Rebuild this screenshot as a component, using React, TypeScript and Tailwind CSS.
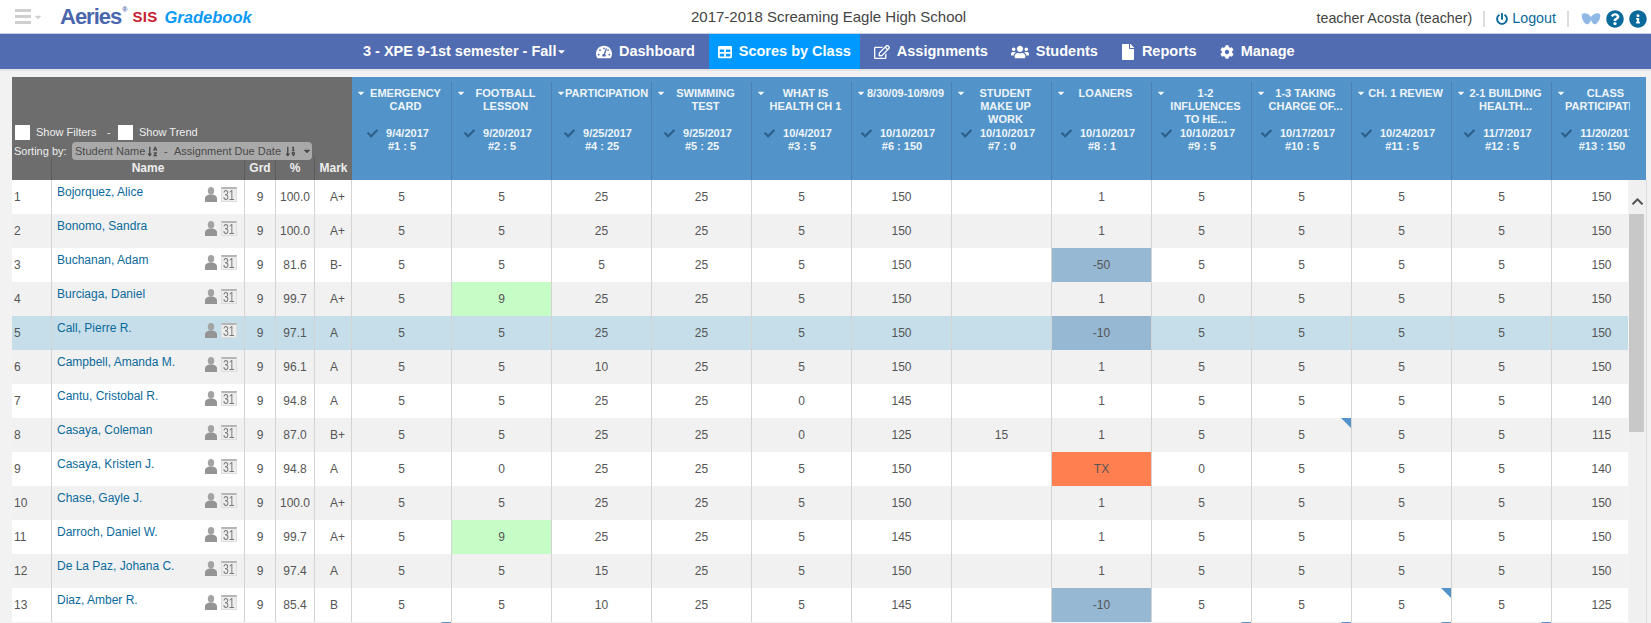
import { Fragment } from "react";
import {
  FaCaretDown,
  FaCheck,
  FaChevronUp,
  FaCog,
  FaFile,
  FaInfoCircle,
  FaPowerOff,
  FaQuestionCircle,
  FaRegEdit,
  FaSortAlphaDown,
  FaSortNumericDown,
  FaTable,
  FaTachometerAlt,
  FaUsers,
} from "react-icons/fa";

const assignments = [
  { title: "EMERGENCY CARD", date: "9/4/2017", info: "#1 : 5" },
  { title: "FOOTBALL LESSON", date: "9/20/2017", info: "#2 : 5" },
  { title: "PARTICIPATION", date: "9/25/2017", info: "#4 : 25" },
  { title: "SWIMMING TEST", date: "9/25/2017", info: "#5 : 25" },
  { title: "WHAT IS HEALTH CH 1", date: "10/4/2017", info: "#3 : 5" },
  { title: "8/30/09-10/9/09", date: "10/10/2017", info: "#6 : 150" },
  { title: "STUDENT MAKE UP WORK", date: "10/10/2017", info: "#7 : 0" },
  { title: "LOANERS", date: "10/10/2017", info: "#8 : 1" },
  { title: "1-2 INFLUENCES TO HE...", date: "10/10/2017", info: "#9 : 5" },
  { title: "1-3 TAKING CHARGE OF...", date: "10/17/2017", info: "#10 : 5" },
  { title: "CH. 1 REVIEW", date: "10/24/2017", info: "#11 : 5" },
  { title: "2-1 BUILDING HEALTH...", date: "11/7/2017", info: "#12 : 5" },
  { title: "CLASS PARTICIPATION", date: "11/20/2017", info: "#13 : 150" },
];

const students = [
  { name: "Bojorquez, Alice", pct: "100.0", mark: "A+", scores: ["5", "5", "25", "25", "5", "150", "", "1", "5", "5", "5", "5", "150"] },
  { name: "Bonomo, Sandra", pct: "100.0", mark: "A+", scores: ["5", "5", "25", "25", "5", "150", "", "1", "5", "5", "5", "5", "150"] },
  { name: "Buchanan, Adam", pct: "81.6", mark: "B-", scores: ["5", "5", "5", "25", "5", "150", "", "-50", "5", "5", "5", "5", "150"] },
  { name: "Burciaga, Daniel", pct: "99.7", mark: "A+", scores: ["5", "9", "25", "25", "5", "150", "", "1", "0", "5", "5", "5", "150"] },
  { name: "Call, Pierre R.", pct: "97.1", mark: "A", scores: ["5", "5", "25", "25", "5", "150", "", "-10", "5", "5", "5", "5", "150"] },
  { name: "Campbell, Amanda M.", pct: "96.1", mark: "A", scores: ["5", "5", "10", "25", "5", "150", "", "1", "5", "5", "5", "5", "150"] },
  { name: "Cantu, Cristobal R.", pct: "94.8", mark: "A", scores: ["5", "5", "25", "25", "0", "145", "", "1", "5", "5", "5", "5", "140"] },
  { name: "Casaya, Coleman", pct: "87.0", mark: "B+", scores: ["5", "5", "25", "25", "0", "125", "15", "1", "5", "5", "5", "5", "115"], notes: [9] },
  { name: "Casaya, Kristen J.", pct: "94.8", mark: "A", scores: ["5", "0", "25", "25", "5", "150", "", "TX", "0", "5", "5", "5", "140"] },
  { name: "Chase, Gayle J.", pct: "100.0", mark: "A+", scores: ["5", "5", "25", "25", "5", "150", "", "1", "5", "5", "5", "5", "150"] },
  { name: "Darroch, Daniel W.", pct: "99.7", mark: "A+", scores: ["5", "9", "25", "25", "5", "145", "", "1", "5", "5", "5", "5", "150"] },
  { name: "De La Paz, Johana C.", pct: "97.4", mark: "A", scores: ["5", "5", "15", "25", "5", "150", "", "1", "5", "5", "5", "5", "150"] },
  { name: "Diaz, Amber R.", pct: "85.4", mark: "B", scores: ["5", "5", "10", "25", "5", "145", "", "-10", "5", "5", "5", "5", "125"], notes: [10] },
];

const navItems = [
  { name: "Dashboard", icon: <FaTachometerAlt className="w-4 h-4" /> },
  { name: "Scores by Class", icon: <FaTable className="w-[14px] h-[14px]" />, active: true },
  { name: "Assignments", icon: <FaRegEdit className="w-4 h-4" /> },
  { name: "Students", icon: <FaUsers className="w-[18px] h-[18px]" /> },
  { name: "Reports", icon: <FaFile className="w-[14px] h-4" /> },
  { name: "Manage", icon: <FaCog className="w-[14px] h-[14px]" /> },
];

function Butterfly() {
  return (
    <svg viewBox="0 0 20 14" className="w-5 h-[14px] blur-[0.7px]">
      <path d="M1 2 C4 0 8 2 10 5 C12 2 16 0 19 2 C20 6 18 10 15 12 C13 13 11 11 10 8 C9 11 7 13 5 12 C2 10 0 6 1 2Z" fill="#8fb9e4" />
    </svg>
  );
}

function UserIcon() {
  return (
    <svg viewBox="0 0 12 15" className="w-3 h-[15px]">
      <ellipse cx="6" cy="3.8" rx="3.2" ry="3.8" fill="#a3a3a3" />
      <path d="M0 15 V11 C0 9.2 2.5 8.4 4.2 7.6 H7.8 C9.5 8.4 12 9.2 12 11 V15Z" fill="#949494" />
    </svg>
  );
}

function CalendarIcon() {
  return (
    <div className="w-4 h-[15px] bg-[#eeeeee] border border-[#dddddd] border-t-[2px] border-t-[#b5b5b5] flex justify-center overflow-hidden">
      <span className="text-[14px] leading-[12px] text-[#777777] scale-x-75">31</span>
    </div>
  );
}

function cellColor(value: string, column: number) {
  if (value === "TX") return "bg-[#ff7f50]";
  if (value === "-50" || value === "-10") return "bg-[#96b8d3] border-r-[#7ea5c4]";
  if (value === "9" && column === 1) return "bg-[#c6fcc6]";
  return "";
}

export default function App() {
  return (
    <div className="h-[623px] overflow-hidden bg-[#f2f2f2] [font-family:'Liberation_Sans',Arial,sans-serif]">
      {/* top bar */}
      <div className="h-[33px] bg-white flex items-start">
        <div className="w-[691px] flex items-center h-[33px] pl-[15px]">
          <div className="flex flex-col gap-[3.5px] w-4">
            <div className="h-[2.5px] bg-[#cfcfcf]"></div>
            <div className="h-[2.5px] bg-[#cfcfcf]"></div>
            <div className="h-[2.5px] bg-[#cfcfcf]"></div>
          </div>
          <FaCaretDown className="w-[10px] h-[10px] ml-[2px] text-[#cfcfcf]" />
          <span className="ml-[17px] text-[22px] font-bold tracking-[-1px] text-[#4a66ae]">Aeries</span>
          <span className="text-[7px] font-bold text-[#4a66ae] mb-[12px] ml-[1px]">®</span>
          <span className="ml-[5px] mt-[2px] text-[15px] font-bold tracking-[0.3px] text-[#c8202f]">SIS</span>
          <span className="ml-[7px] mt-[2px] text-[16.5px] font-bold italic text-[#0a9af5]">Gradebook</span>
        </div>
        <div className="pt-[8px] text-[15px] leading-[18px] text-[#444]">2017-2018 Screaming Eagle High School</div>
        <div className="ml-auto flex items-center h-[38px] pr-[4px] text-[14.3px]">
          <span className="text-[#444]">teacher Acosta (teacher)</span>
          <div className="ml-[11px] w-[2px] h-[16px] bg-[#ddd]"></div>
          <FaPowerOff className="ml-[11px] w-[12px] h-[12px] text-[#0a6a9c]" />
          <span className="ml-[4px] text-[#0a6a9c]">Logout</span>
          <div className="ml-[11px] w-[2px] h-[16px] bg-[#ddd]"></div>
          <div className="ml-[12px]"><Butterfly /></div>
          <FaQuestionCircle className="ml-[5px] w-[18px] h-[18px] text-[#0a6a9c]" />
          <FaInfoCircle className="ml-[5px] w-[18px] h-[18px] text-[#0a6a9c]" />
        </div>
      </div>

      {/* nav */}
      <div className="h-[36px] bg-[#516cb0] border-t border-t-[#c4cfe6] flex items-stretch text-white text-[14.5px] font-bold">
        <div className="ml-[363px] w-[224px] flex items-center">
          <span>3 - XPE 9-1st semester - Fall</span>
          <FaCaretDown className="w-[11px] h-[11px]" />
        </div>
        <div className="flex items-stretch gap-[5px]">
          {navItems.map((item) => (
            <div
              key={item.name}
              className={`flex items-center gap-[7px] px-[9px] ${item.active ? "bg-[#0099ff]" : ""}`}
            >
              {item.icon}
              <span>{item.name}</span>
            </div>
          ))}
        </div>
      </div>
      <div className="h-[2px] bg-[#e3e3e3]"></div>

      {/* gradebook */}
      <div className="ml-[12px] mt-[6px]">
        <div className="flex h-[103px] w-[1634px]">
          <div className="w-[340px] bg-[#6d6d6d] flex flex-col justify-end text-[11px] text-[#eee] whitespace-nowrap">
            <div className="flex items-center pl-[3px] h-[15px] mb-[2px]">
              <div className="w-[15px] h-[15px] bg-white"></div>
              <span className="ml-[6px] w-[60px]">Show Filters</span>
              <span className="ml-[11px] w-[4px]">-</span>
              <div className="ml-[7px] w-[15px] h-[15px] bg-white"></div>
              <span className="ml-[6px]">Show Trend</span>
            </div>
            <div className="flex items-center pl-[2px] h-[18px] relative z-10">
              <span className="w-[58px]">Sorting by:</span>
              <div className="w-[240px] h-[18px] rounded-[4px] bg-[#a9a9a9] flex items-center pl-[3px] text-[#4a4a4a]">
                <span className="w-[72px]">Student Name</span>
                <FaSortAlphaDown className="w-[11px] h-[11px] shrink-0" />
                <span className="ml-[6px] w-[4px]">-</span>
                <span className="ml-[6px] w-[108px]">Assignment Due Date</span>
                <FaSortNumericDown className="ml-[3px] w-[11px] h-[11px] shrink-0" />
                <FaCaretDown className="ml-[6px] w-[10px] h-[10px] shrink-0" />
              </div>
            </div>
            <div className="flex h-[23px] -mt-[3px] font-bold text-[12px] text-center leading-[23px]">
              <div className="w-[40px] border-r border-r-[#5c5c5c]"></div>
              <div className="w-[193px] border-r border-r-[#5c5c5c]">Name</div>
              <div className="w-[31px] border-r border-r-[#5c5c5c]">Grd</div>
              <div className="w-[39px] border-r border-r-[#5c5c5c]">%</div>
              <div className="w-[37px]">Mark</div>
            </div>
          </div>
          <div className="flex-1 flex bg-[#5294c9] overflow-hidden pt-[5px]">
            {assignments.map((a, i) => (
              <div
                key={a.info}
                className={`shrink-0 overflow-hidden text-[11px] leading-[13px] font-bold text-[#eef4f9] ${
                  i === 12 ? "w-[78px]" : "w-[100px] border-r border-r-[#4a83b3]"
                }`}
              >
                <div className="w-[100px] pt-[5px]">
                  <div className="flex items-start h-[40px]">
                    <FaCaretDown className="w-[8px] h-[10px] ml-[5px] mt-[1px] shrink-0" />
                    <div className="w-[81px] shrink-0 text-center">{a.title}</div>
                  </div>
                  <div className="flex items-center justify-center gap-[8px] pr-[8px] whitespace-nowrap">
                    <FaCheck className="w-[11px] h-[11px] text-[#2d5f8a]" />
                    <span>{a.date}</span>
                  </div>
                  <div className="text-center whitespace-nowrap">{a.info}</div>
                </div>
              </div>
            ))}
          </div>
        </div>

        <div className="flex w-[1635px]">
          <div className="w-[1617px] overflow-hidden text-[12px] text-[#555]">
            {students.map((s, r) => (
              <div
                key={s.name}
                className={`flex h-[34px] w-[1640px] ${
                  r === 4 ? "bg-[#c6deea]" : r % 2 === 0 ? "bg-white" : "bg-[#f1f1f1]"
                }`}
              >
                <div className="w-[40px] shrink-0 border-r border-r-[#d4d4d4] pl-[2px] leading-[35px]">{r + 1}</div>
                <div className="w-[193px] shrink-0 border-r border-r-[#d4d4d4] flex justify-between pl-[5px] pr-[7px] pt-[5px]">
                  <span className="leading-[15px] text-[#0a6a9c]">{s.name}</span>
                  <div className="flex gap-1 pt-[2px] h-[17px]">
                    <UserIcon />
                    <CalendarIcon />
                  </div>
                </div>
                <div className="w-[31px] shrink-0 border-r border-r-[#d4d4d4] text-center leading-[35px]">9</div>
                <div className="w-[39px] shrink-0 border-r border-r-[#d4d4d4] text-center leading-[35px]">{s.pct}</div>
                <div className="w-[37px] shrink-0 border-r border-r-[#d4d4d4] pl-[15px] leading-[35px]">{s.mark}</div>
                {s.scores.map((score, c) => (
                  <Fragment key={c}>
                    <div
                      className={`relative w-[100px] shrink-0 border-r border-r-[#d4d4d4] text-center leading-[35px] ${cellColor(score, c)}`}
                    >
                      {score}
                      {s.notes?.includes(c) && (
                        <div className="absolute top-0 right-0 w-0 h-0 border-t-[10px] border-t-[#5294c9] border-l-[10px] border-l-transparent"></div>
                      )}
                    </div>
                  </Fragment>
                ))}
              </div>
            ))}
            <div className="flex h-[34px] w-[1640px] bg-[#f1f1f1]">
              <div className="w-[340px] shrink-0"></div>
              {assignments.map((a, c) => (
                <div key={a.info} className="relative w-[100px] shrink-0">
                  {[0, 8, 9, 10, 11].includes(c) && (
                    <div className="absolute top-0 right-[1px] w-0 h-0 border-t-[10px] border-t-[#5294c9] border-l-[10px] border-l-transparent"></div>
                  )}
                </div>
              ))}
            </div>
          </div>
          <div className="w-[18px] ml-[1px] border-r border-r-[#ddd] bg-[#f0f0f0]">
            <div className="h-[34px] flex items-center justify-center pr-[1px] pt-[8px] text-[#555]">
              <FaChevronUp className="w-[13px] h-[13px]" />
            </div>
            <div className="h-[218px] w-[15px] bg-[#c8c8c8]"></div>
          </div>
        </div>
      </div>
    </div>
  );
}
